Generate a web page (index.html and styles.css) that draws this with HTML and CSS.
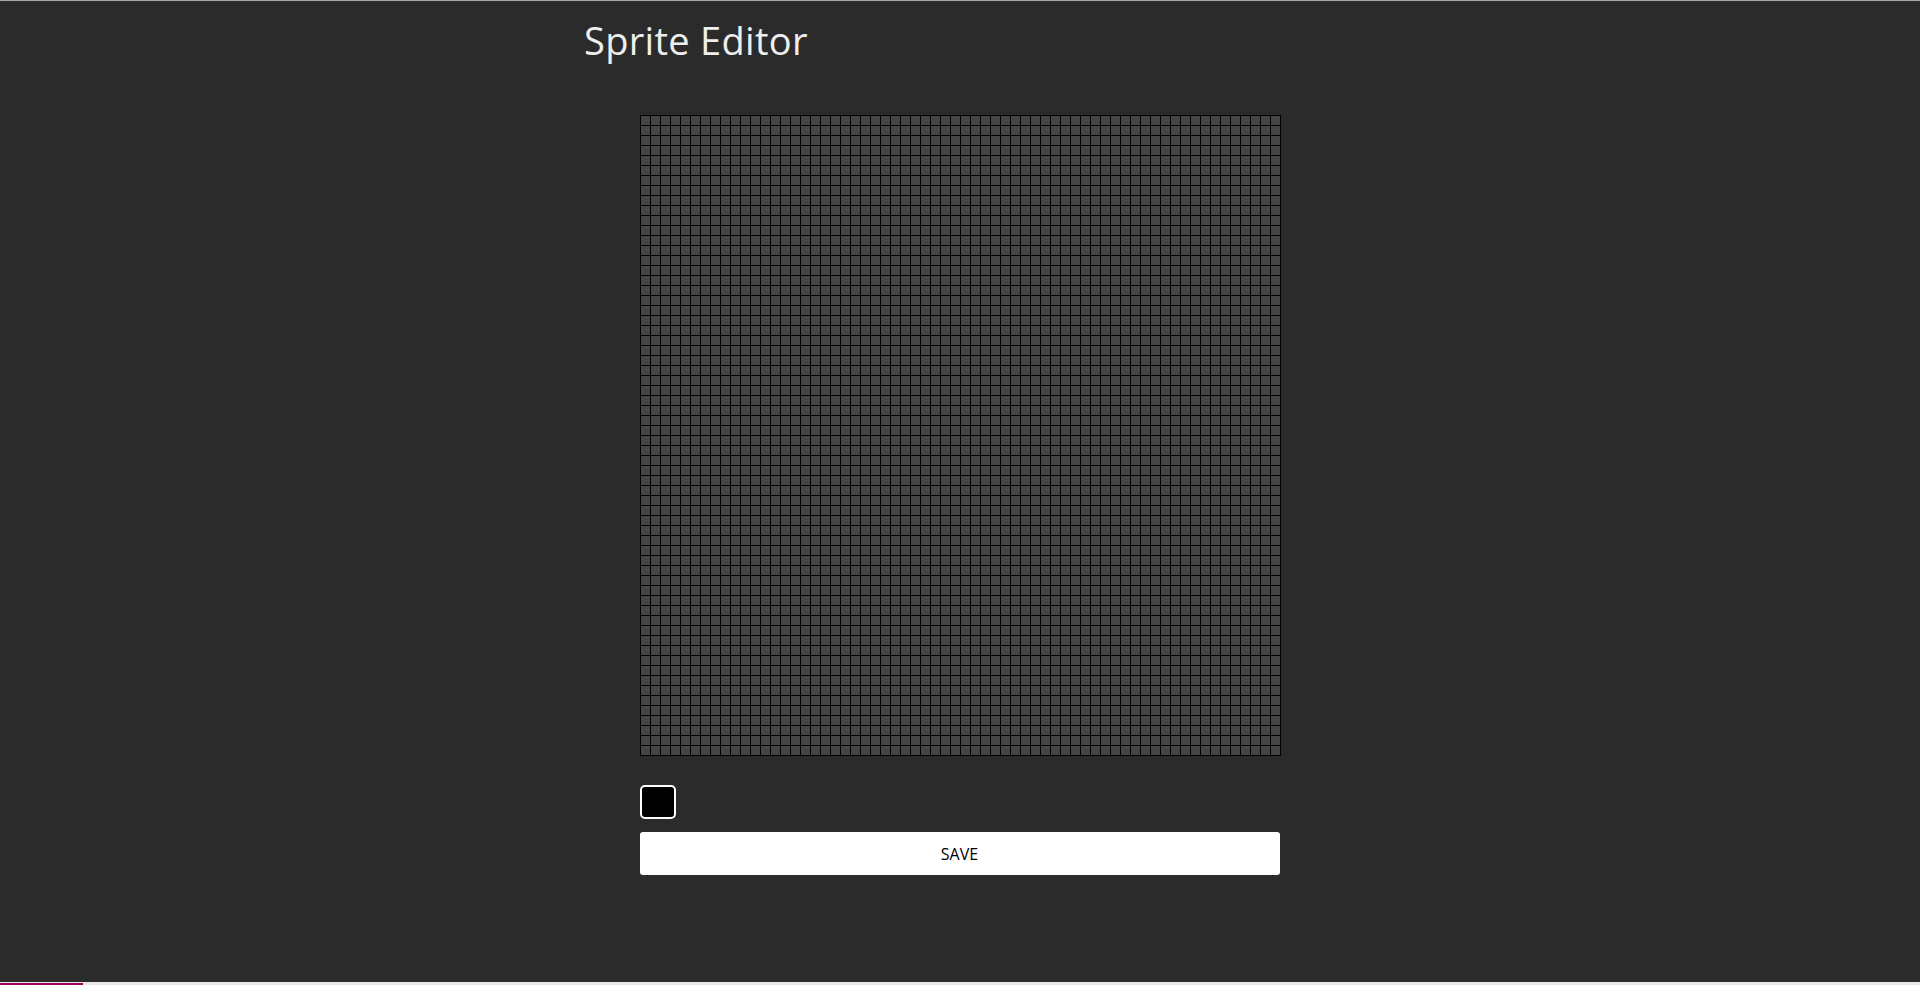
FILE: index.html
```html
<!DOCTYPE html>
<html lang="en">
<head>
<meta charset="utf-8">
<title>Sprite Editor</title>
<link rel="stylesheet" href="styles.css">
</head>
<body>
<div class="page">
  <header class="header">
    <h1 class="title">Sprite Editor</h1>
  </header>
  <main class="editor">
    <div class="grid" id="grid"></div>
    <div class="color-row">
      <div class="color-swatch"></div>
    </div>
    <button class="save-btn">SAVE</button>
  </main>
</div>
<div class="statusbar"><div class="statusbar-fill"></div></div>
<script>
  var g = document.getElementById('grid');
  var html = '';
  for (var i = 0; i < 64 * 64; i++) html += '<div class="cell"></div>';
  g.innerHTML = html;
</script>
</body>
</html>
```

FILE: styles.css
```css
html, body {
  margin: 0;
  padding: 0;
  background: #2b2b2b;
  height: 100%;
}

.page {
  border-top: 1px solid #a9a9a9;
  min-height: 100%;
  box-sizing: border-box;
  display: flex;
  flex-direction: column;
  align-items: center;
}

.header {
  width: 800px;
  box-sizing: border-box;
  padding: 0 24px;
}

.title {
  margin: 0;
  padding-top: 13px;
  font-family: "Open Sans", "Noto Sans", sans-serif;
  font-weight: 400;
  font-size: 38px;
  line-height: 52px;
  color: #eeeeee;
  letter-spacing: 0.3px;
}

.editor {
  display: flex;
  flex-direction: column;
  width: 641px;
  margin-top: 49px;
}

.grid {
  display: grid;
  grid-template-columns: repeat(64, 9px);
  grid-auto-rows: 9px;
  gap: 1px;
  padding: 1px;
  width: 641px;
  height: 641px;
  box-sizing: border-box;
  background: #000000;
}

.cell {
  background: #454545;
}

.color-row {
  display: flex;
  margin-top: 29px;
}

.color-swatch {
  width: 36px;
  height: 34px;
  box-sizing: border-box;
  border: 2px solid #ffffff;
  border-radius: 5px;
  background: #000000;
}

.save-btn {
  margin-top: 13px;
  width: 640px;
  height: 43px;
  border: none;
  border-radius: 3px;
  background: #ffffff;
  color: #000000;
  font-family: "Open Sans", "Noto Sans", sans-serif;
  font-size: 16px;
  padding: 0;
  cursor: pointer;
}

.statusbar {
  position: fixed;
  left: 0;
  right: 0;
  bottom: 0;
  height: 3px;
  background: #e6e6e6;
}

.statusbar-fill {
  width: 83px;
  height: 2px;
  margin-top: 1px;
  background: #a3005e;
}
```
